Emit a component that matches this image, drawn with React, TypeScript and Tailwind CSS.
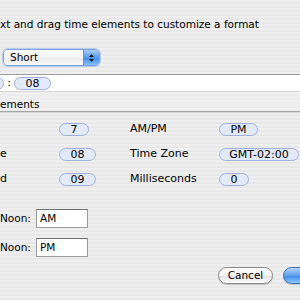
const stripes =
  "bg-[repeating-linear-gradient(to_bottom,#efefef_0px,#efefef_2px,#e8e8e8_2px,#e8e8e8_4px)]";

function Token({ w, children }: { w: string; children?: React.ReactNode }) {
  return (
    <div
      className={`${w} h-[13px] shrink-0 rounded-full border border-[#9db1dc] bg-[#e2eafa] flex items-center justify-center text-[11px] leading-[11px] text-black`}
    >
      {children}
    </div>
  );
}

function ElementRow({
  label,
  token,
  tokenW,
  label2,
  token2,
  token2W,
}: {
  label: string;
  token: string;
  tokenW: string;
  label2: string;
  token2: string;
  token2W: string;
}) {
  return (
    <div className="flex items-center h-[25px]">
      <div className="w-[59px] text-[11px]">{label}</div>
      <div className="w-[71px]">
        <Token w={tokenW}>{token}</Token>
      </div>
      <div className="w-[89px] text-[11px]">{label2}</div>
      <Token w={token2W}>{token2}</Token>
    </div>
  );
}

export default function App() {
  return (
    <div
      className={`w-[300px] h-[300px] overflow-hidden ${stripes} font-['DejaVu_Sans',sans-serif] text-black`}
    >
      <div className="pt-[17px] text-[10.5px] leading-[14px] whitespace-nowrap">
        xt and drag time elements to customize a format
      </div>

      {/* format popup */}
      <div className="mt-[18px] ml-[3px] w-[97px] h-[17px] rounded-[5px] border border-[#7b9fd6] shadow-[0_0_0_1px_#b7cdef] flex overflow-hidden">
        <div className="flex-1 bg-[linear-gradient(to_bottom,#ffffff,#f3f3f3_50%,#e9e9e9_51%,#fafafa)] text-[10.5px] leading-[15px] pl-[6px]">
          Short
        </div>
        <div className="w-[16px] bg-[linear-gradient(to_bottom,#a6cbf6,#5a9cec_50%,#3f88e6_51%,#86c0fa)] border-l border-[#6c8fc6] flex flex-col items-center justify-center gap-[2px]">
          <svg width="5" height="3" viewBox="0 0 5 3">
            <path d="M2.5 0 L5 3 L0 3 Z" fill="#1a1a1a" />
          </svg>
          <svg width="5" height="3" viewBox="0 0 5 3">
            <path d="M0 0 L5 0 L2.5 3 Z" fill="#1a1a1a" />
          </svg>
        </div>
      </div>

      {/* format field */}
      <div className="mt-[8px] h-[18px] bg-white border-t border-[#9a9a9a] border-b border-b-[#d4d4d4] flex items-center">
        <div className="-ml-[30px]">
          <Token w="w-[34px]" />
        </div>
        <div className="w-[10px] text-[11px] text-center">:</div>
        <Token w="w-[37px]">08</Token>
      </div>

      {/* group header */}
      <div className="mt-[1px] h-[19px] border-b border-[#a5a5a5] bg-[#f0f0f0]/60 text-[10.5px] leading-[18px] pt-[2px] shadow-[0_1px_0_#d6d6d6]">
        ements
      </div>

      <div className="mt-[5px]">
        <ElementRow label="" token="7" tokenW="w-[30px]" label2="AM/PM" token2="PM" token2W="w-[39px]" />
        <ElementRow label="e" token="08" tokenW="w-[37px]" label2="Time Zone" token2="GMT-02:00" token2W="w-[80px]" />
        <ElementRow label="d" token="09" tokenW="w-[37px]" label2="Milliseconds" token2="0" token2W="w-[30px]" />
      </div>

      {/* noon fields */}
      <div className="mt-[17px] flex flex-col gap-[10px]">
        <div className="flex items-center">
          <div className="w-[36px] text-[10.5px]">Noon:</div>
          <div className="w-[52px] h-[19px] bg-white border border-[#9b9b9b] border-t-[#6f6f6f] text-[10.5px] leading-[17px] pl-[3px]">
            AM
          </div>
        </div>
        <div className="flex items-center">
          <div className="w-[36px] text-[10.5px]">Noon:</div>
          <div className="w-[52px] h-[19px] bg-white border border-[#9b9b9b] border-t-[#6f6f6f] text-[10.5px] leading-[17px] pl-[3px]">
            PM
          </div>
        </div>
      </div>

      {/* buttons */}
      <div className="mt-[10px] pl-[218px] flex gap-[10px]">
        <div className="w-[55px] h-[17px] shrink-0 rounded-full border border-[#8a8a8a] bg-[linear-gradient(to_bottom,#ffffff,#f2f2f2_50%,#e2e2e2_51%,#fbfbfb)] shadow-[0_1px_1px_rgba(0,0,0,0.2)] text-[10.5px] leading-[15px] text-center">
          Cancel
        </div>
        <div className="w-[70px] h-[17px] shrink-0 rounded-full border border-[#3d6fb8] bg-[linear-gradient(to_bottom,#b3d4fa,#5c9eee_50%,#3a85e6_51%,#8cc8fc)] shadow-[0_1px_1px_rgba(0,0,0,0.2)]" />
      </div>
    </div>
  );
}
